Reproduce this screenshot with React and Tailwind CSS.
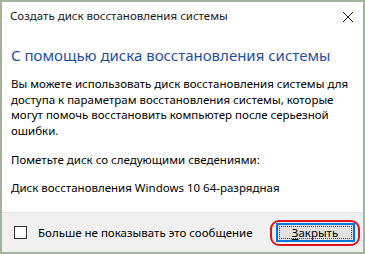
import React from "react";

const font = { fontFamily: '"Noto Sans", "Open Sans", Arial, sans-serif' };

export default function App() {
  return (
    <div
      className="w-[365px] h-[254px] bg-[#f0f0f0] border-2 border-[#a3b39c] flex flex-col text-black overflow-hidden"
      style={font}
    >
      {/* Title bar */}
      <div className="h-[30px] bg-white flex items-center justify-between pl-[8px] pr-[6px] shrink-0">
        <span className="text-[11.5px] text-[#1a1a1a] -mt-[2px]">
          Создать диск восстановления системы
        </span>
        <svg width="12" height="12" viewBox="0 0 12 12" className="mr-[3px]">
          <path d="M1 1 L11 11 M11 1 L1 11" stroke="#222" strokeWidth="1" />
        </svg>
      </div>

      {/* Content */}
      <div className="bg-white flex-1 pl-[9px] pr-[10px] pt-[13px]">
        <h1 className="text-[15px] leading-[20px] text-[#1f4fa3]">
          С помощью диска восстановления системы
        </h1>
        <p className="mt-[11px] text-[11.5px] leading-[15.5px]">
          Вы можете использовать диск восстановления системы для доступа к
          параметрам восстановления системы, которые могут помочь восстановить
          компьютер после серьезной ошибки.
        </p>
        <p className="mt-[14px] text-[11.5px] leading-[15.5px]">
          Пометьте диск со следующими сведениями:
        </p>
        <p className="mt-[12px] text-[11.5px] leading-[15.5px]">
          Диск восстановления Windows 10 64-разрядная
        </p>
      </div>

      {/* Footer */}
      <div className="h-[40px] shrink-0 bg-[#f0f0f0] border-t border-[#e6e6e6] flex items-center justify-between pl-[12px] pr-[3px]">
        <label className="flex items-center gap-[11px] text-[11.5px]">
          <span className="w-[13px] h-[13px] border border-[#333] bg-white" />
          Больше не показывать это сообщение
        </label>
        <div className="w-[90px] h-[26px] border-2 border-[#e0141e] rounded-[9px] flex items-center justify-center">
          <button className="w-[79px] h-[19px] bg-[#e1e1e1] border-2 border-[#0078d7] flex items-center justify-center text-[11.5px] outline-1 outline-dotted outline-offset-[-4px] outline-[#444]">
            <span>
              <span className="underline underline-offset-2">З</span>акрыть
            </span>
          </button>
        </div>
      </div>
    </div>
  );
}
